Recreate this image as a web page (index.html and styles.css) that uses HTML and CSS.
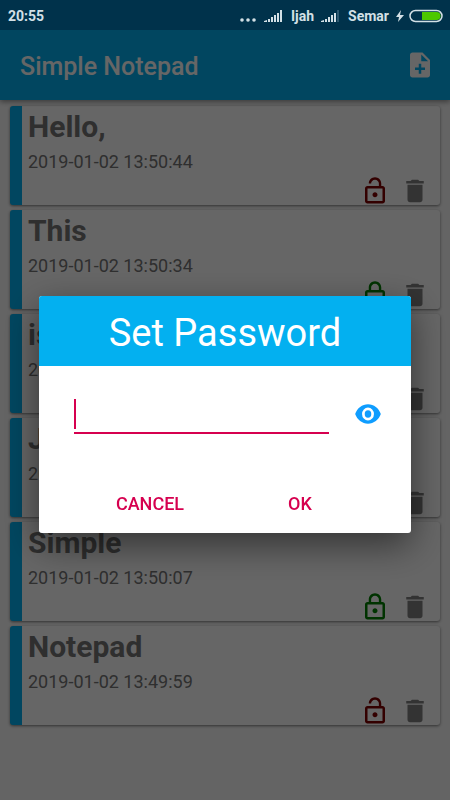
FILE: index.html
```html
<!DOCTYPE html>
<html lang="en">
<head>
    <meta charset="UTF-8">
    <meta name="viewport" content="width=device-width, initial-scale=1.0">
    <title>Simple Notepad</title>
    <link rel="stylesheet" href="styles.css">
</head>
<body>
    <!-- Shared icons -->
    <svg class="sprite" aria-hidden="true">
        <symbol id="icon-lock" viewBox="0 0 24 24">
            <path d="M12 17c1.1 0 2-.9 2-2s-.9-2-2-2-2 .9-2 2 .9 2 2 2zm6-9h-1V6c0-2.760-2.240-5-5-5S7 3.240 7 6v2H6c-1.100 0-2 .9-2 2v10c0 1.100.9 2 2 2h12c1.100 0 2-.9 2-2V10c0-1.100-.9-2-2-2zM8.900 6c0-1.710 1.390-3.100 3.100-3.100s3.100 1.390 3.100 3.100v2H8.900V6zM18 20H6V10h12v10z"/>
        </symbol>
        <symbol id="icon-lock-open" viewBox="0 0 24 24">
            <path d="M12 17c1.1 0 2-.9 2-2s-.9-2-2-2-2 .9-2 2 .9 2 2 2zm6-9h-1V6c0-2.760-2.240-5-5-5S7 3.240 7 6h1.900c0-1.710 1.390-3.100 3.100-3.100s3.100 1.390 3.100 3.100v2H6c-1.100 0-2 .9-2 2v10c0 1.100.9 2 2 2h12c1.100 0 2-.9 2-2V10c0-1.100-.9-2-2-2zm0 12H6V10h12v10z"/>
        </symbol>
        <symbol id="icon-delete" viewBox="0 0 24 24">
            <path d="M6 19c0 1.100.9 2 2 2h8c1.100 0 2-.9 2-2V7H6v12zM19 4h-3.500l-1-1h-5l-1 1H5v2h14V4z"/>
        </symbol>
    </svg>

    <div class="status-bar">
        <span class="clock">20:55</span>
        <svg class="dots" viewBox="0 0 16 14" aria-hidden="true">
            <circle cx="2" cy="11" r="1.800"/>
            <circle cx="8" cy="11" r="1.800"/>
            <circle cx="14" cy="11" r="1.800"/>
        </svg>
        <svg class="signal" viewBox="0 0 19 14" aria-hidden="true">
            <path d="M0 13v-1l3-1v2zM4 10h2v3H4zM7 8h2v5H7zM10 6h2v7h-2zM13 4h2v9h-2zM16 1h2v12h-2z"/>
        </svg>
        <span class="carrier">Ijah</span>
        <svg class="signal" viewBox="0 0 19 14" aria-hidden="true">
            <path d="M0 13v-1l3-1v2zM4 10h2v3H4zM7 8h2v5H7zM10 6h2v7h-2zM13 4h2v9h-2z"/>
            <path class="weak" d="M16 1h2v12h-2z"/>
        </svg>
        <span class="carrier">Semar</span>
        <svg class="bolt" viewBox="0 0 8 14" aria-hidden="true">
            <path d="M5 1L0 8h3L2 13l6-7H4z"/>
        </svg>
        <svg class="battery" viewBox="0 0 34 14" aria-hidden="true">
            <rect class="battery-case" x="1" y="1.500" width="32" height="11" rx="5.500"/>
            <path class="battery-level" d="M13 3h14.500a4 4 0 0 1 0 8H13z"/>
        </svg>
    </div>

    <header class="app-bar">
        <h1>Simple Notepad</h1>
        <button class="icon-button" type="button" aria-label="Add note">
            <svg viewBox="0 0 24 24">
                <path d="M14 2H6c-1.100 0-1.990.9-1.990 2L4 20c0 1.100.890 2 1.990 2H18c1.100 0 2-.9 2-2V8l-6-6zm2 14h-3v3h-2v-3H8v-2h3v-3h2v3h3v2zm-3-7V3.500L18.500 9H13z"/>
            </svg>
        </button>
    </header>

    <main>
        <ul class="notes">
            <li class="note">
                <h2>Hello,</h2>
                <time>2019-01-02 13:50:44</time>
                <div class="actions">
                    <button class="icon-button unlocked" type="button" aria-label="Lock note"><svg><use href="#icon-lock-open"/></svg></button>
                    <button class="icon-button delete" type="button" aria-label="Delete note"><svg><use href="#icon-delete"/></svg></button>
                </div>
            </li>
            <li class="note">
                <h2>This</h2>
                <time>2019-01-02 13:50:34</time>
                <div class="actions">
                    <button class="icon-button locked" type="button" aria-label="Unlock note"><svg><use href="#icon-lock"/></svg></button>
                    <button class="icon-button delete" type="button" aria-label="Delete note"><svg><use href="#icon-delete"/></svg></button>
                </div>
            </li>
            <li class="note">
                <h2>is</h2>
                <time>2019-01-02 13:50:26</time>
                <div class="actions">
                    <button class="icon-button unlocked" type="button" aria-label="Lock note"><svg><use href="#icon-lock-open"/></svg></button>
                    <button class="icon-button delete" type="button" aria-label="Delete note"><svg><use href="#icon-delete"/></svg></button>
                </div>
            </li>
            <li class="note">
                <h2>Just</h2>
                <time>2019-01-02 13:50:17</time>
                <div class="actions">
                    <button class="icon-button unlocked" type="button" aria-label="Lock note"><svg><use href="#icon-lock-open"/></svg></button>
                    <button class="icon-button delete" type="button" aria-label="Delete note"><svg><use href="#icon-delete"/></svg></button>
                </div>
            </li>
            <li class="note">
                <h2>Simple</h2>
                <time>2019-01-02 13:50:07</time>
                <div class="actions">
                    <button class="icon-button locked" type="button" aria-label="Unlock note"><svg><use href="#icon-lock"/></svg></button>
                    <button class="icon-button delete" type="button" aria-label="Delete note"><svg><use href="#icon-delete"/></svg></button>
                </div>
            </li>
            <li class="note">
                <h2>Notepad</h2>
                <time>2019-01-02 13:49:59</time>
                <div class="actions">
                    <button class="icon-button unlocked" type="button" aria-label="Lock note"><svg><use href="#icon-lock-open"/></svg></button>
                    <button class="icon-button delete" type="button" aria-label="Delete note"><svg><use href="#icon-delete"/></svg></button>
                </div>
            </li>
        </ul>
    </main>

    <div class="overlay">
        <form class="dialog" role="dialog" aria-modal="true" aria-labelledby="dialogTitle">
            <h2 id="dialogTitle">Set Password</h2>
            <div class="password-row">
                <input type="password" id="password" aria-label="Password">
                <button class="icon-button show-password" type="button" aria-label="Show password">
                    <svg viewBox="0 0 24 24">
                        <path fill-rule="evenodd" d="M12 3.700C7 3.700 2.730 7.100 1 12c1.730 4.900 6 8.300 11 8.300s9.270-3.400 11-8.300c-1.730-4.900-6-8.300-11-8.300zM6.900 12a5.100 5.600 0 1 0 10.200 0a5.100 5.600 0 1 0-10.200 0zM9.200 12a2.800 3.200 0 1 0 5.600 0a2.800 3.200 0 1 0-5.600 0z"/>
                    </svg>
                </button>
            </div>
            <div class="dialog-buttons">
                <button type="button">CANCEL</button>
                <button type="button">OK</button>
            </div>
        </form>
    </div>
</body>
</html>
```
FILE: styles.css
```css
* {
    box-sizing: border-box;
}
body {
    font-family: Roboto, "Liberation Sans", sans-serif;
    margin: 0;
    background-color: #fafafa;
}
h1, h2 {
    margin: 0;
}
button {
    font-family: inherit;
    padding: 0;
    border: 0;
    background: none;
    cursor: pointer;
}
.sprite {
    display: none;
}

/* Status bar stays above the overlay */
.status-bar {
    position: relative;
    z-index: 3;
    display: flex;
    align-items: center;
    height: 30px;
    padding: 1px 7px 0 8px;
    background-color: #00324b;
    color: #d3e0e6;
    font-size: 14px;
    font-weight: 700;
}
.status-bar svg {
    height: 14px;
    fill: #d3e0e6;
}
.clock {
    margin-right: auto;
}
.dots {
    width: 16px;
    margin-right: 8px;
}
.signal {
    width: 19px;
}
.signal .weak {
    fill: #2c5870;
}
.carrier {
    margin: 0 7px 0 8px;
}
.bolt {
    width: 8px;
    margin-right: 5px;
}
.battery {
    width: 34px;
}
.status-bar .battery-case {
    fill: none;
    stroke: #d3e0e6;
    stroke-width: 1.5;
}
.status-bar .battery-level {
    fill: #4cc800;
}

.app-bar {
    position: relative;
    display: flex;
    align-items: center;
    justify-content: space-between;
    height: 70px;
    padding: 0 15px 0 20px;
    background-color: #03b0f0;
    color: #fff;
    box-shadow: 0 2px 5px rgba(0, 0, 0, 0.4);
}
.app-bar h1 {
    padding-top: 4px;
    font-size: 25px;
    font-weight: 500;
    line-height: 30px;
}
.icon-button {
    width: 30px;
    height: 30px;
    color: inherit;
}
.icon-button svg {
    display: block;
    width: 30px;
    height: 30px;
    fill: currentColor;
}

.notes {
    display: flex;
    flex-direction: column;
    gap: 5px;
    margin: 0;
    padding: 6px 10px;
    list-style: none;
}
.note {
    display: flex;
    flex-direction: column;
    height: 99px;
    padding-left: 6px;
    border-left: 12px solid #03b0f0;
    border-radius: 3px;
    background-color: #fff;
    color: #757575;
    box-shadow: 0 1px 3px rgba(0, 0, 0, 0.5);
}
.note h2 {
    font-size: 30px;
    line-height: 42px;
}
.note time {
    font-size: 18px;
    line-height: 28px;
}
.actions {
    display: flex;
    justify-content: flex-end;
    gap: 10px;
    padding-right: 10px;
}
.unlocked {
    color: #800000;
}
.locked {
    color: #008000;
}
.delete {
    color: #808080;
}

.overlay {
    position: fixed;
    inset: 0;
    z-index: 2;
    display: flex;
    align-items: center;
    justify-content: center;
    padding: 28px 39px 0;
    background-color: rgba(0, 0, 0, 0.6);
}
.dialog {
    width: 100%;
    max-width: 480px;
    border-radius: 3px;
    background-color: #fff;
    box-shadow: 0 12px 36px rgba(0, 0, 0, 0.5);
    overflow: hidden;
}
.dialog h2 {
    padding: 12px 10px 8px;
    background-color: #03b0f0;
    color: #fff;
    font-size: 38px;
    font-weight: 400;
    line-height: 50px;
    text-align: center;
}
.password-row {
    display: flex;
    align-items: center;
    gap: 24px;
    padding: 28px 28px 0 35px;
}
.password-row input {
    flex: 1;
    min-width: 0;
    height: 40px;
    padding: 0 6px;
    border: 0;
    border-bottom: 2px solid #d6004f;
    outline: 0;
    /* text cursor */
    background: linear-gradient(#d6004f, #d6004f) 0 5px / 2px 30px no-repeat;
    font-size: 24px;
}
.show-password {
    color: #0f9dff;
}
.show-password svg {
    padding: 1px;
}
.dialog-buttons {
    display: flex;
    padding: 45px 36px 4px;
}
.dialog-buttons button {
    flex: 1;
    height: 50px;
    color: #d6004f;
    font-size: 18px;
    font-weight: 500;
}
```
